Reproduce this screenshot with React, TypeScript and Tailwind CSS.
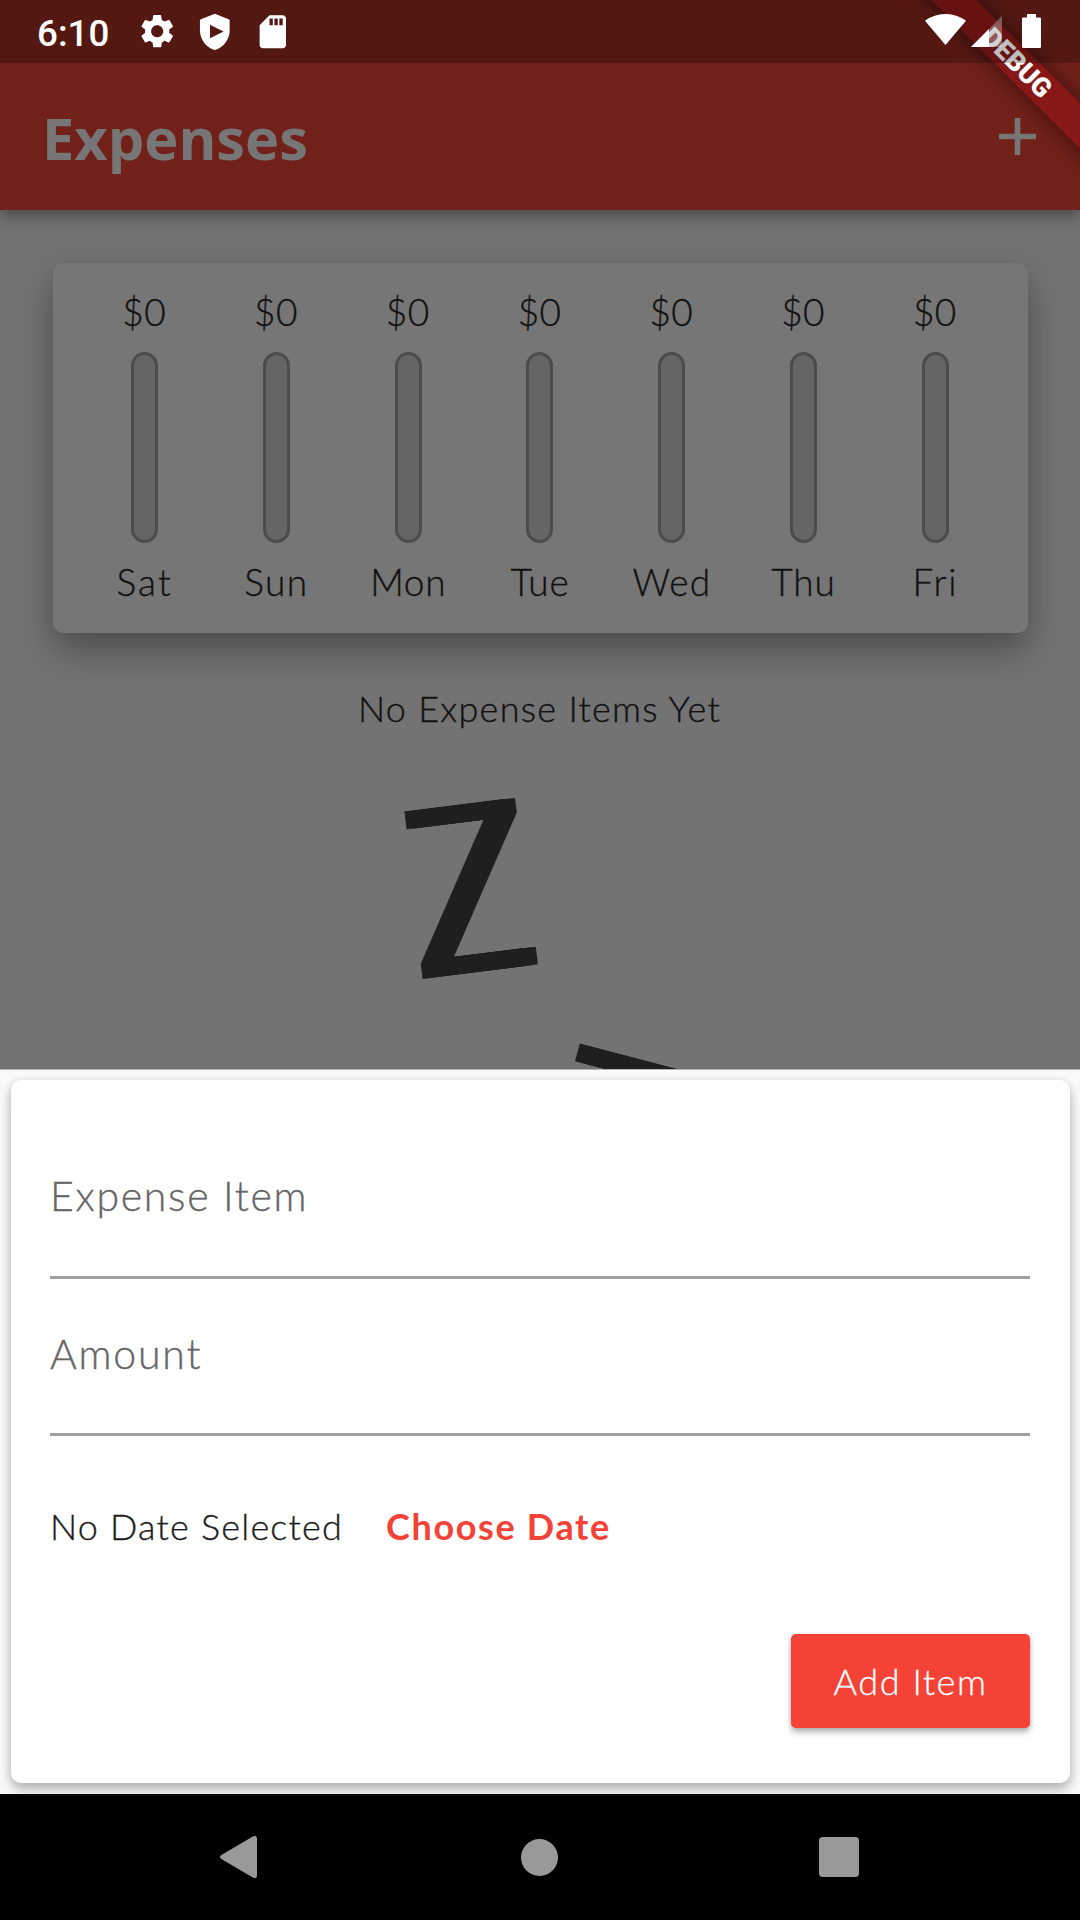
import { MdSdCard, MdSettings } from "react-icons/md";

const days = [
  { label: "Sat", tracking: "tracking-[2.2px]" },
  { label: "Sun", tracking: "tracking-[1.4px]" },
  { label: "Mon", tracking: "tracking-[0.7px]" },
  { label: "Tue", tracking: "tracking-[0.7px]" },
  { label: "Wed", tracking: "tracking-[1.1px]" },
  { label: "Thu", tracking: "tracking-[1px]" },
  { label: "Fri", tracking: "tracking-[1.7px]" },
];

function ShieldPlayIcon() {
  return (
    <svg className="size-[39.6px]" viewBox="0 0 24 24" fill="currentColor" fillRule="evenodd">
      <path d="M12 1 3.6 4.4Q3 4.7 3 5.3V11c0 5.55 3.84 10.74 9 12 5.16-1.26 9-6.45 9-12V5.3q0-.6-.6-.9zM9.1 7.7v8.2l8.2-4.1z" />
    </svg>
  );
}

function StatusBar() {
  return (
    <div className="relative z-20 flex h-[63px] items-center bg-black/25 text-white">
      <span className="ml-[37px] mt-1 w-[100px] font-['Roboto'] text-[36.75px] leading-[44px] font-medium">6:10</span>
      <MdSettings className="size-[40.4px]" />
      <div className="ml-[18px]">
        <ShieldPlayIcon />
      </div>
      <MdSdCard className="ml-[18.5px] size-[39.6px]" />
      <div className="mr-[39px] mb-px ml-auto flex items-end">
        <svg className="mb-[3px] h-[31px] w-[41px]" viewBox="0.36 3 23.28 18.5" preserveAspectRatio="none" fill="currentColor">
          <path d="M12 21.5 23.64 7c-.45-.34-4.93-4-11.64-4S.81 6.66.36 7z" />
        </svg>
        <svg className="mb-px ml-[5.5px] h-[31px] w-[31px]" viewBox="0 0 31 31" fill="currentColor">
          <path d="M31 0v31H0z" opacity="0.3" />
          <path d="M18 13v18H0z" />
        </svg>
        <svg className="ml-[20px] h-[34px] w-[19px]" viewBox="0 0 19 34" fill="currentColor">
          <path d="M5 0h9v3.5h3.8q1.2 0 1.2 1.2v28.1q0 1.2-1.2 1.2H1.2Q0 34 0 32.8V4.7q0-1.2 1.2-1.2H5z" />
        </svg>
      </div>
    </div>
  );
}

function DebugBanner() {
  return (
    <div className="pointer-events-none absolute top-0 right-0 z-10 h-[210px] w-[220px] overflow-hidden">
      <div className="absolute top-[46.75px] left-[-12.75px] flex h-[32px] w-[340px] rotate-45 items-center justify-center bg-[#881818] font-['Roboto'] text-[26.8px] leading-none font-black text-white shadow-[0_0_20px_rgba(0,0,0,0.5)]">
        <span>DEBUG</span>
      </div>
    </div>
  );
}

function AppBar() {
  return (
    <div className="flex h-[147px] items-center justify-between pr-[44.5px] pl-[42px] text-[#767676]">
      <h1 className="pt-[2px] font-['Open_Sans'] text-[57.75px] leading-[80px] font-bold">Expenses</h1>
      <svg className="size-[37px]" viewBox="0 0 37 37" fill="currentColor">
        <path d="M15.7 0h5.6v15.8H37v5.4H21.3V37h-5.6V21.2H0v-5.4h15.7z" />
      </svg>
    </div>
  );
}

function Chart() {
  return (
    <div className="mx-[52.5px] mt-[52.5px] h-[370px] rounded-[10px] bg-[#767676] px-[26.25px] pt-[27px] text-[37px] leading-[44px] font-light text-[#111] shadow-[0_20px_36px_rgba(0,0,0,0.26),0_6px_24px_rgba(0,0,0,0.1)]">
      <div className="grid grid-cols-7">
        {days.map((d) => (
          <div key={d.label} className="flex flex-col items-center">
            <span className="pr-[1px] tracking-[0.4px]">$0</span>
            <div className="mt-[18px] h-[191px] w-[27px] rounded-full border-[3px] border-[#4c4c4c] bg-[#656565]" />
            <span className={`mt-[17px] ${d.tracking}`}>{d.label}</span>
          </div>
        ))}
      </div>
    </div>
  );
}

function SleepingIllustration() {
  return (
    <div className="absolute inset-0 font-['Open_Sans'] text-[235px] leading-[168px] font-normal text-[#1f1f1f] [-webkit-text-stroke:0.8px]">
      <span className="absolute top-[587px] left-[395.500px] origin-[74px_91.2px] [transform:rotate(-7.1deg)_scaleX(0.89)] [text-shadow:5px_0_#1f1f1f,10px_0_#1f1f1f,14px_0_#1f1f1f]">
        Z
      </span>
      <span className="absolute top-[837.6px] left-[537.8px] origin-[74px_91.2px] [transform:rotate(14.7deg)_scaleX(0.89)] [text-shadow:5px_0_#1f1f1f,10px_0_#1f1f1f,14px_0_#1f1f1f]">
        Z
      </span>
    </div>
  );
}

function AddExpenseSheet() {
  return (
    <div className="relative h-[725px] overflow-hidden border-t border-[#b5b5b5] bg-[#fafafa] px-[10.5px] pt-[10px]">
      <div className="flex h-[703px] flex-col rounded-[10px] bg-white px-[39.5px] pt-[91px] shadow-[0_8px_13px_rgba(0,0,0,0.2),0_2px_10px_rgba(0,0,0,0.16)]">
        <div className="h-[108px] border-b-[3px] border-[#a0a0a0] text-[41px] leading-[50px] font-light tracking-[1.7px] text-[#666]">
          Expense Item
        </div>
        <div className="mt-[50px] h-[107px] border-b-[3px] border-[#a0a0a0] text-[41px] leading-[50px] font-light tracking-[1.8px] text-[#666]">
          Amount
        </div>
        <div className="mt-[68px] flex text-[36px] leading-[44px]">
          <span className="w-[336px] font-light tracking-[1.2px] text-[#1c1c1c]">No Date Selected</span>
          <button className="font-bold tracking-[1.65px] text-[#f44336] [-webkit-text-stroke:0px]">Choose Date</button>
        </div>
        <button className="mt-[86px] h-[94px] w-[239px] self-end rounded-[5px] bg-[#f44336] text-[36px] leading-[44px] font-light tracking-[1.55px] text-white shadow-[0_5px_6px_rgba(0,0,0,0.22),0_1px_4px_rgba(0,0,0,0.2)]">
          Add Item
        </button>
      </div>
    </div>
  );
}

function NavBar() {
  return (
    <div className="h-[126px] bg-black pr-[91px] pl-[88px]">
      <div className="grid h-full grid-cols-3 place-items-center">
        <svg className="h-[42px] w-[37px]" viewBox="0 0 37 42" fill="#999">
          <path d="M1.4 18.9 32.8.5Q37-1.4 37 2.8v36.4q0 4.200-4.200 2.300L1.400 23.100q-2.800-2.100 0-4.200z" />
        </svg>
        <div className="ml-[2px] size-[37px] rounded-full bg-[#999]" />
        <div className="mb-px size-[40px] rounded-[4px] bg-[#999]" />
      </div>
    </div>
  );
}

export default function App() {
  return (
    <div className="relative flex h-[1920px] w-[1080px] flex-col overflow-hidden bg-[#737373] font-['Lato',sans-serif] [-webkit-text-stroke:0.35px]">
      <header className="relative z-10 h-[210px] bg-[#71201a] shadow-[0_6px_14px_rgba(0,0,0,0.36)] [-webkit-text-stroke:0px]">
        <StatusBar />
        <AppBar />
        <DebugBanner />
      </header>
      <main className="relative h-[859px] overflow-hidden">
        <Chart />
        <p className="mt-[53.5px] pr-[1px] text-center text-[36px] leading-[44px] font-light tracking-[1.27px] text-[#111]">
          No Expense Items Yet
        </p>
        <SleepingIllustration />
      </main>
      <AddExpenseSheet />
      <NavBar />
    </div>
  );
}
